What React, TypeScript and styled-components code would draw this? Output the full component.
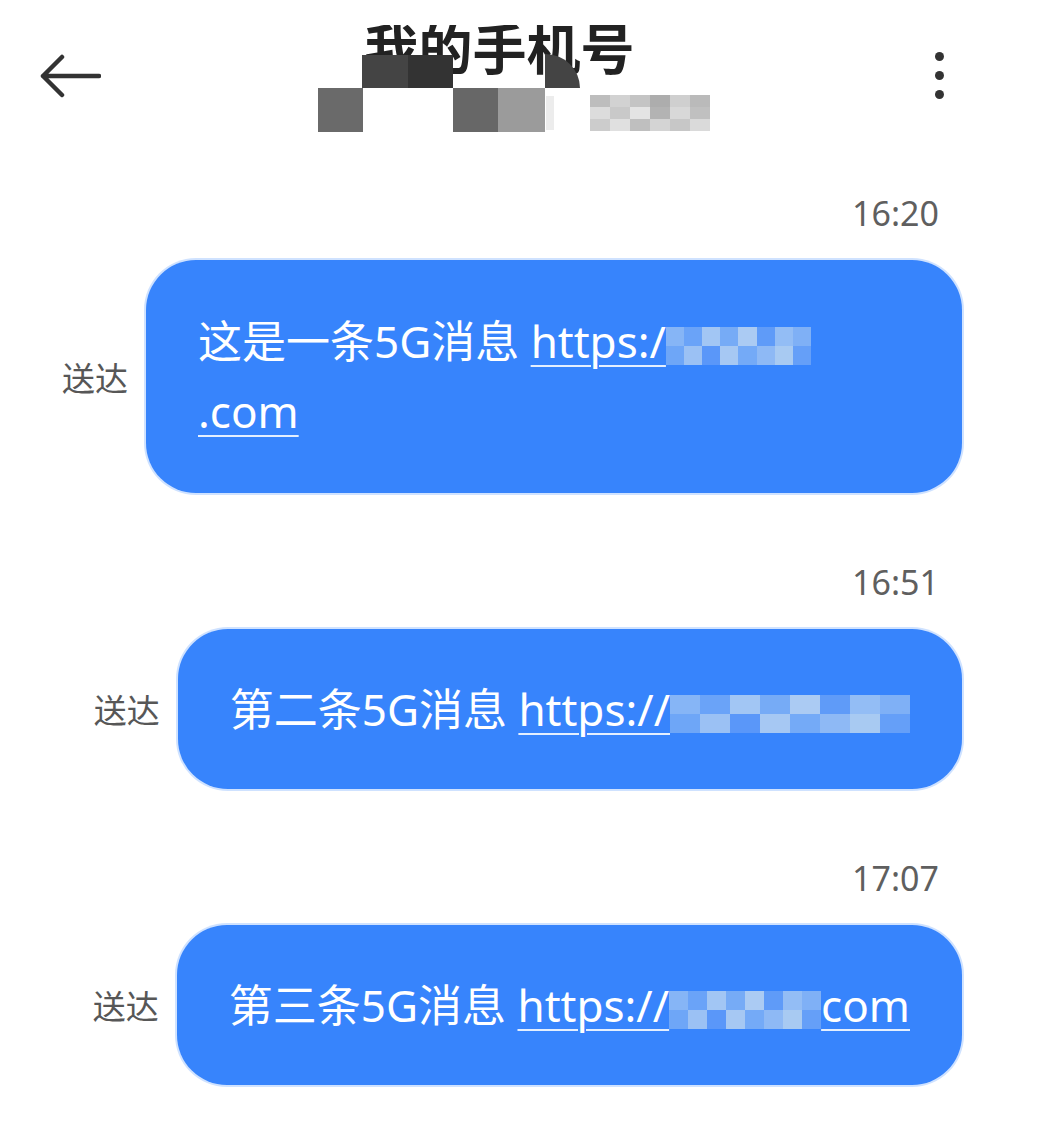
import React from 'react';
import styled, { createGlobalStyle } from 'styled-components';

interface MessageType {
  id: number;
  time: string;
  text: string;
  prefix: string;
  blur: number;
  tail: string;
  wrapTail?: boolean;
}

const messages: MessageType[] = [
  { id: 1, time: '16:20', text: '这是一条5G消息 ', prefix: 'https:/', blur: 145, tail: '.com', wrapTail: true },
  { id: 2, time: '16:51', text: '第二条5G消息 ', prefix: 'https://', blur: 240, tail: '' },
  { id: 3, time: '17:07', text: '第三条5G消息 ', prefix: 'https://', blur: 152, tail: 'com' },
];

// 모자이크 블록 (헤더 위에 덮임)
const mosaic = [
  { x: 362, y: 55, w: 46, h: 33, c: '#444444' },
  { x: 408, y: 55, w: 45, h: 33, c: '#333333' },
  { x: 318, y: 88, w: 45, h: 44, c: '#6a6a6a' },
  { x: 453, y: 88, w: 45, h: 44, c: '#676767' },
  { x: 498, y: 88, w: 47, h: 44, c: '#9b9b9b' },
  { x: 546, y: 96, w: 8, h: 34, c: '#ececec' },
];

const lightCells = ['#bdbdbd', '#d2d2d2', '#c4c4c4', '#adadad', '#cfcfcf', '#bababa',
  '#dcdcdc', '#c9c9c9', '#e4e4e4', '#b3b3b3', '#d8d8d8', '#c0c0c0',
  '#cccccc', '#e0e0e0', '#bfbfbf', '#d4d4d4', '#c7c7c7', '#dadada'];

const blurCells = ['#86b5f6', '#6aa3f8', '#a2c6f4', '#76abf6', '#abcbf3', '#5f9bf8', '#93bdf5', '#7fb0f6',
  '#6ea6f7', '#9bc1f4', '#5a97f9', '#a6c8f3', '#74aaf7', '#8eb9f5', '#a8caf2', '#659ff8'];

const GlobalStyle = createGlobalStyle`
  body {
    margin: 0;
    background: #ffffff;
    font-family: "Noto Sans", "Noto Sans CJK SC", sans-serif;
  }
`;

const App = () => {
  return (
    <Page>
      <GlobalStyle />
      <Header>
        <BackButton aria-label="返回">
          <svg width="62" height="44" viewBox="0 0 62 44" fill="none">
            <path d="M60 22H4M23 3L4 22l19 19" stroke="#333" strokeWidth="4.5" strokeLinecap="round" strokeLinejoin="round" />
          </svg>
        </BackButton>
        <TitleColumn>
          <TitleClip>
            <Title>我的手机号</Title>
          </TitleClip>
        </TitleColumn>
        <MenuButton aria-label="更多">
          <Dot />
          <Dot />
          <Dot />
        </MenuButton>
        {mosaic.map((m, i) => (
          <Block key={i} style={{ left: m.x, top: m.y, width: m.w, height: m.h, background: m.c }} />
        ))}
        <CurveBlock />
        <LightMosaic>
          {lightCells.map((c, i) => (
            <span key={i} style={{ background: c }} />
          ))}
        </LightMosaic>
      </Header>

      <List>
        {messages.map((msg) => (
          <Group key={msg.id}>
            <Time>{msg.time}</Time>
            <Row>
              <Status>送达</Status>
              <Bubble $wide={msg.wrapTail}>
                {msg.text}
                <Link>
                  {msg.prefix}
                  <Blur style={{ width: msg.blur }}>
                    {blurCells.map((c, i) => (
                      <span key={i} style={{ background: c }} />
                    ))}
                  </Blur>
                  {msg.wrapTail ? (
                    <>
                      <br />
                      {msg.tail}
                    </>
                  ) : (
                    msg.tail
                  )}
                </Link>
              </Bubble>
            </Row>
          </Group>
        ))}
      </List>
    </Page>
  );
};

const Page = styled.div`
  width: 1039px;
  min-height: 1137px;
  background: #fff;
`;

const Header = styled.header`
  position: relative;
  display: grid;
  grid-template-columns: 120px 1fr 160px;
  height: 160px;
`;

const BackButton = styled.button`
  align-self: start;
  margin: 54px 0 0 39px;
  padding: 0;
  border: 0;
  background: none;
  width: 62px;
  height: 44px;
`;

const TitleColumn = styled.div`
  display: flex;
  justify-content: center;
`;

const TitleClip = styled.div`
  margin-top: 25px;
  height: 52px;
  overflow: hidden;
`;

const Title = styled.h1`
  margin: -10px 0 0;
  font-family: "Noto Sans CJK SC", sans-serif;
  font-size: 54px;
  line-height: 64px;
  font-weight: 700;
  color: #222;
`;

const MenuButton = styled.button`
  align-self: start;
  margin: 52px 0 0 56px;
  padding: 0;
  border: 0;
  background: none;
  display: flex;
  flex-direction: column;
  gap: 10px;
  width: 10px;
`;

const Dot = styled.span`
  width: 9px;
  height: 9px;
  border-radius: 50%;
  background: #333;
`;

const Block = styled.div`
  position: absolute;
`;

const CurveBlock = styled.div`
  position: absolute;
  left: 545px;
  top: 54px;
  width: 35px;
  height: 34px;
  background: #444;
  border-top-right-radius: 100%;
`;

const LightMosaic = styled.div`
  position: absolute;
  left: 590px;
  top: 95px;
  width: 120px;
  height: 36px;
  display: grid;
  grid-template-columns: repeat(6, 1fr);
  grid-template-rows: repeat(3, 1fr);
`;

const List = styled.main`
  display: flex;
  flex-direction: column;
  gap: 69px;
  padding: 33px 77px 0 0;
`;

const Group = styled.section`
  display: flex;
  flex-direction: column;
  align-items: flex-end;
  gap: 27px;
`;

const Time = styled.div`
  padding-right: 23px;
  font-size: 34px;
  line-height: 40px;
  color: #5f5f5f;
`;

const Row = styled.div`
  display: flex;
  align-items: center;
  gap: 18px;
`;

const Status = styled.div`
  font-size: 33px;
  color: #575757;
`;

const Bubble = styled.div<{ $wide?: boolean }>`
  box-sizing: border-box;
  width: ${(p) => (p.$wide ? '816px' : 'auto')};
  padding: ${(p) => (p.$wide ? '46px 52px 47px' : '45px 52px')};
  border-radius: 50px;
  background: #3784fc;
  box-shadow: 0 0 0 2px #cfe2ff;
  color: #fff;
  font-size: 44px;
  line-height: 70px;
  white-space: nowrap;
`;

const Link = styled.span`
  text-decoration: underline;
  text-decoration-color: #e4efff;
  text-decoration-thickness: 2px;
  text-underline-offset: 7px;
`;

const Blur = styled.span`
  display: inline-grid;
  grid-template-columns: repeat(8, 1fr);
  grid-template-rows: repeat(2, 1fr);
  height: 38px;
  vertical-align: middle;
`;

export default App;
